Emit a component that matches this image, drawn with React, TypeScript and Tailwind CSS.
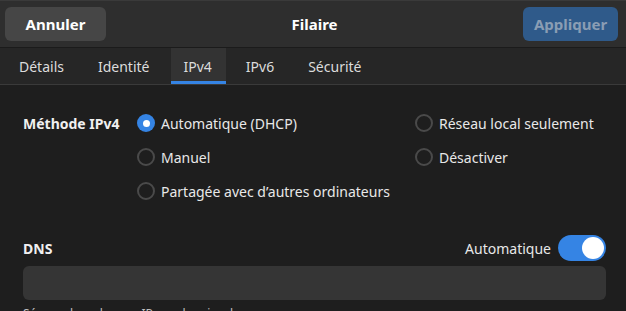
import React from "react";

function Radio({ checked, label }: { checked?: boolean; label: string }) {
  return (
    <div className="flex h-[34px] items-center whitespace-nowrap">
      {checked ? (
        <span className="flex h-[18px] w-[18px] shrink-0 items-center justify-center rounded-full bg-[#3584e4]">
          <span className="h-[7px] w-[7px] rounded-full bg-white" />
        </span>
      ) : (
        <span className="h-[18px] w-[18px] shrink-0 rounded-full border-2 border-[#4a4a4a]" />
      )}
      <span className="ml-[6px] text-[14px] text-[#e8e8e8]">{label}</span>
    </div>
  );
}

export default function App() {
  const tabs = ["Détails", "Identité", "IPv4", "IPv6", "Sécurité"];
  return (
    <div
      className="h-[311px] w-[626px] overflow-hidden bg-[#1e1e1e] text-white"
      style={{ fontFamily: '"Noto Sans", "Open Sans", sans-serif' }}
    >
      {/* header */}
      <div className="flex h-[48px] items-center justify-between border-b border-[#1b1b1b] border-t border-t-[#3a3a3a] bg-[#2e2e2e] px-[5px]">
        <div className="flex h-[34px] w-[101px] items-center justify-center rounded-[6px] bg-[#464646] text-[15px] font-bold text-white">
          Annuler
        </div>
        <div className="text-[15px] font-bold text-white">Filaire</div>
        <div className="mr-[3px] flex h-[34px] w-[95px] items-center justify-center rounded-[6px] bg-[#2f5a8a] text-[15px] font-bold text-[#8a9db4]">
          Appliquer
        </div>
      </div>
      {/* tabs */}
      <div className="flex h-[37px] border-b border-[#3a3a3a] bg-[#262626] pl-[2px]">
        {tabs.map((t) => {
          const active = t === "IPv4";
          return (
            <div
              key={t}
              className="relative flex h-full items-center px-[17px] text-[14px] text-[#dcdcdc]"
            >
              {active && (
                <span className="absolute bottom-0 left-[4px] right-[3px] top-0 bg-[#333333]">
                  <span className="absolute bottom-0 left-0 right-0 h-[3px] bg-[#3584e4]" />
                </span>
              )}
              <span className="relative">{t}</span>
            </div>
          );
        })}
      </div>
      {/* content */}
      <div className="pl-[23px] pr-[20px] pt-[21px]">
        <div className="flex">
          <div className="flex h-[34px] w-[114px] items-center text-[14px] font-bold text-[#f0f0f0]">
            Méthode IPv4
          </div>
          <div className="flex w-[278px] flex-col">
            <Radio checked label="Automatique (DHCP)" />
            <Radio label="Manuel" />
            <Radio label="Partagée avec d’autres ordinateurs" />
          </div>
          <div className="flex flex-col">
            <Radio label="Réseau local seulement" />
            <Radio label="Désactiver" />
          </div>
        </div>
        <div className="mt-[26px] flex h-[28px] items-center justify-between">
          <div className="text-[14px] font-bold text-[#f0f0f0]">DNS</div>
          <div className="flex items-center">
            <span className="mr-[7px] text-[14px] text-[#e8e8e8]">Automatique</span>
            <span className="flex h-[26px] w-[48px] items-center justify-end rounded-full bg-[#3584e4] pr-[2px]">
              <span className="h-[22px] w-[22px] rounded-full bg-white" />
            </span>
          </div>
        </div>
        <div className="mt-[4px] h-[34px] rounded-[6px] bg-[#353535]" />
        <div className="mt-[5px] text-[12px] text-[#bdbdbd]">
          Séparer les adresses IP par des virgules
        </div>
      </div>
    </div>
  );
}
